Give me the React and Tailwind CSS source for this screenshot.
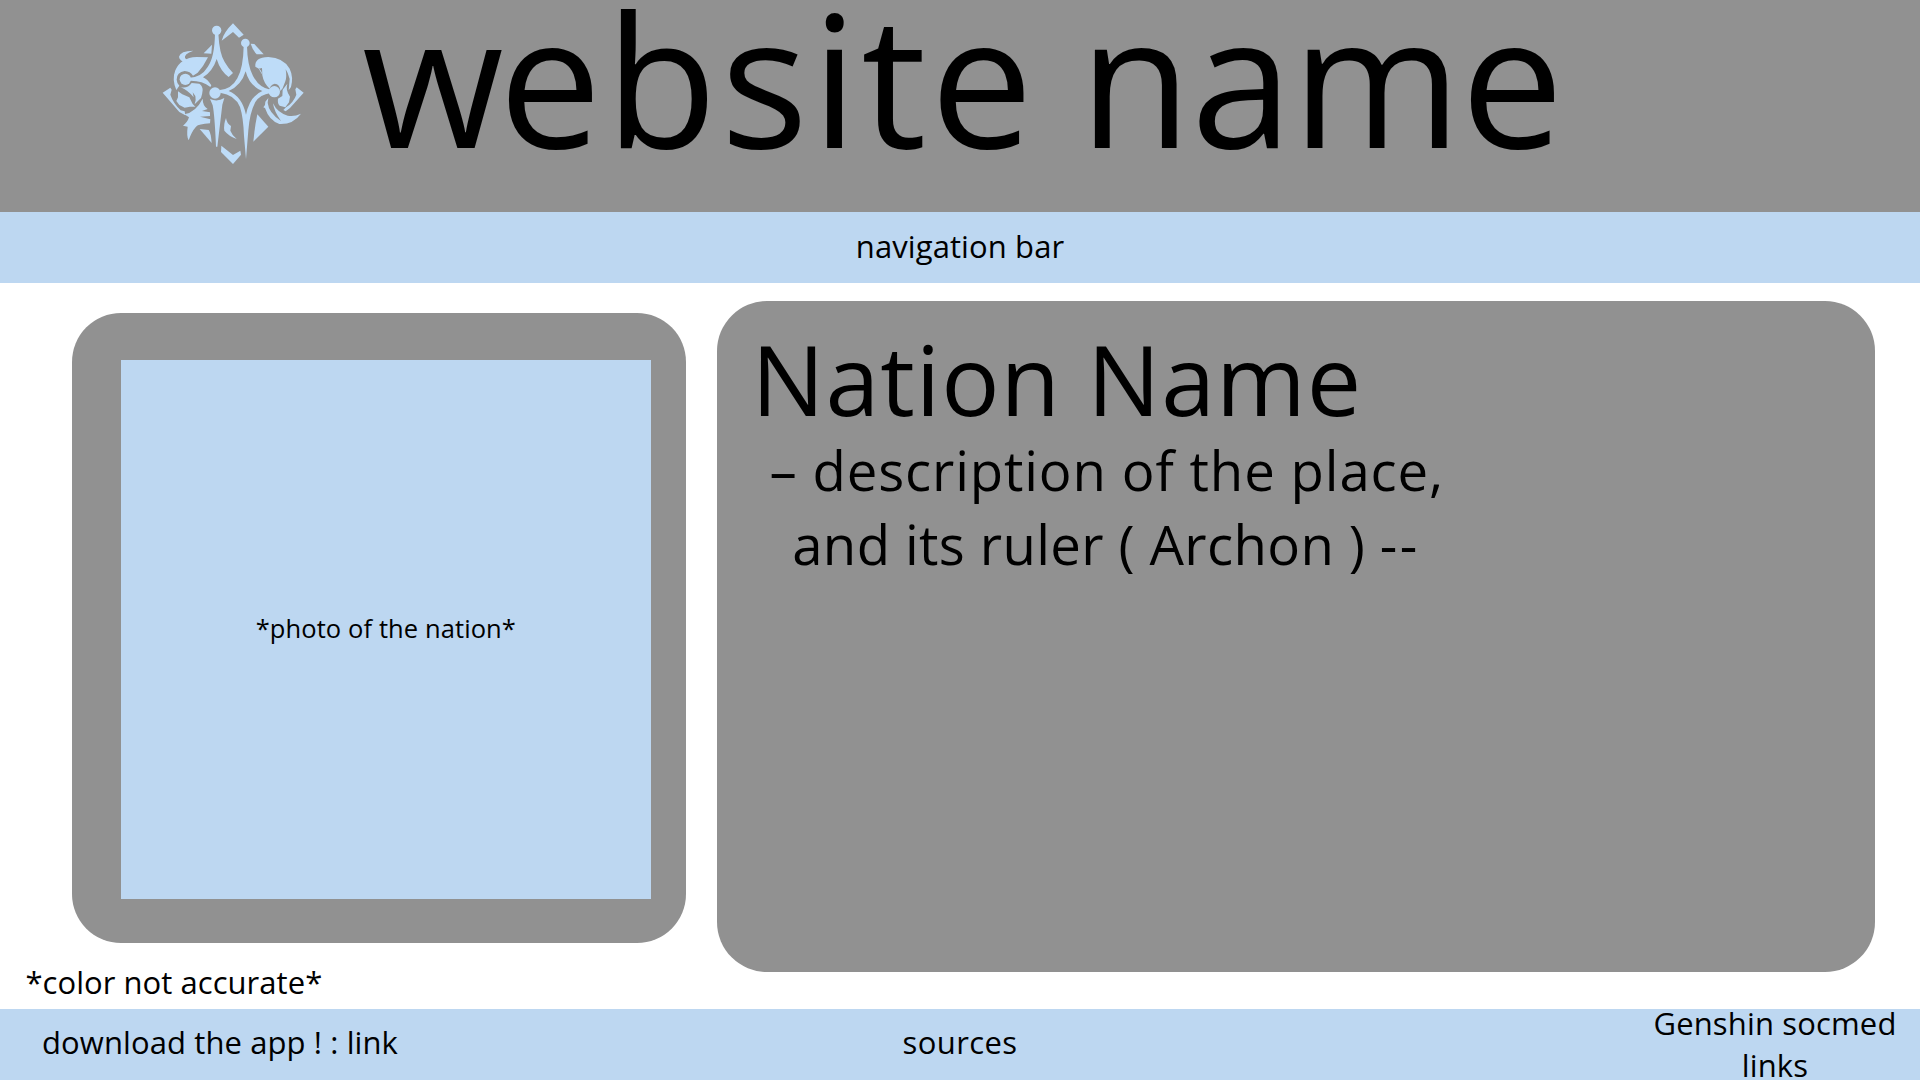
function Emblem() {
  return (
    <svg viewBox="0 0 495 495" className="mt-[10px] ml-[150px] h-[165px] w-[165px] shrink-0 fill-[#bedcf8]" aria-hidden="true">
      {/* frame corners */}
      <path d="M215 92 Q222 66 249 40 L281 74 L267 83 L249 66 Z" />
      <path d="M302 101 L313 102 L341 133 L320 133 Q308 121 302 101 Z" />
      <path d="M186 104 L184 131 L161 130 Z" />
      <path d="M214 407 L249 435 L271 422 L273 434 L249 462 L213 426 Z" />
      <path d="M38 248 L61 233 L65 239 L61 254 Q70 280 92 301 L104 304 L106 316 L88 306 Z" />
      <path d="M461 248 L440 232 L436 238 L439 254 Q431 277 408 292 L400 300 L407 304 L420 294 Z" />
      <path d="M149 357 L176 360 Q183 369 185 399 Z" />
      <path d="M322 313 L355 350 L310 395 Q314 350 322 313 Z" />
      <path d="M228 324 Q230 340 243 348 L241 362 Q246 375 260 387 Q237 379 223 362 Q220 344 228 324 Z" />
      {/* left tall star */}
      <circle cx="200" cy="61" r="14" />
      <path d="M195 70 L205 70 Q208 132 224 156 Q235 175 249 189 L236 201 Q211 183 200 147 Q188 184 159 202 Q172 207 184 226 L181 231 Q156 211 119 212 L119 203 Q154 202 173 171 Q194 142 195 70 Z" />
      <circle cx="106" cy="208" r="17" />
      {/* right tall star */}
      <circle cx="286" cy="99" r="13" />
      <path fillRule="evenodd" d="M281 108 H291 Q292 166 309 198 Q329 235 362 239 V249 Q330 254 316 276 Q299 309 295 361 L288 448 L282 378 Q280 322 270 291 Q255 254 210 248 V240 Q245 237 262 205 Q280 173 281 108 Z M287 184 Q274 227 236 243 Q276 259 288 314 Q299 259 337 243 Q298 228 287 184 Z" />
      <circle cx="195" cy="249" r="17" />
      <circle cx="373" cy="245" r="17" />
      <path d="M180 267 Q202 277 223 264 L217 284 L202 410 L198 410 Q194 315 188 286 Z" />
      {/* left figure */}
      <path d="M130 122 Q101 132 105 144 Q108 150 121 154 L105 158 Q88 151 87 140 Q91 122 130 122 Z" />
      <path d="M174 142 Q161 169 143 188 L129 197 Q121 184 104 183 Q80 186 80 209 Q81 221 88 227 L79 240 Q65 209 76 181 Q92 143 140 141 Z" />
      <path d="M91 231 Q112 237 125 219 L148 221 Q158 228 158 240 Q157 254 153 264 L134 283 Q139 270 136 258 L128 247 L131 262 Q116 242 91 231 Z" />
      <path d="M84 244 L97 253 L118 262 L128 282 L136 290 L120 290 L104 293 L88 285 L79 273 L84 262 Z" />
      <path d="M103 313 Q138 306 158 266 Q158 288 173 297 L156 303 L180 307 V318 L150 320 L181 328 L180 340 Q146 342 138 350 Q124 366 116 391 Q109 378 113 350 L99 347 Q113 336 117 322 Z" />
      {/* right figure */}
      <path fillRule="evenodd" d="M316 170 Q313 142 355 141 Q400 143 419 176 Q431 201 423 231 L416 241 L419 207 Q414 188 407 178 Q411 201 406 214 L398 235 L391 243 Q390 222 374 221 Q361 225 359 236 Q341 220 337 196 Q335 179 324 175 Z M326 176 L337 194 L336 174 Z" />
      <path d="M412 221 Q406 240 420 260 L417 277 L406 292 L389 287 Q382 281 384 266 L397 258 L398 239 Z" />
      <path d="M355 264 L353 278 Q356 308 393 333 Q372 304 369 280 Q382 308 413 317 Q432 321 453 311 Q429 344 388 342 Q357 331 345 294 L340 292 Q347 286 346 275 Z" />
    </svg>
  );
}

export default function App() {
  return (
    <div className="flex h-[1080px] w-[1920px] flex-col overflow-hidden bg-white font-['Open_Sans','Noto_Sans',sans-serif] text-[31px] text-black">
      <header className="flex h-[212px] shrink-0 items-start bg-[#919191]">
        <Emblem />
        <h1 className="ml-[47px] text-[183px] leading-[154px] tracking-[-0.6px] whitespace-nowrap">
          <span className="tracking-[-5px]">w</span>
          <span className="tracking-[3.6px]">ebsit</span>e name
        </h1>
      </header>

      <nav className="flex h-[71px] shrink-0 justify-center bg-[#bdd7f1] leading-[68px] tracking-[0.1px]">
        <span>navigation bar</span>
      </nav>

      <main className="flex h-[726px] shrink-0 items-start gap-[31.5px] pl-[72px]">
        <section className="w-[613.5px] shrink-0 pt-[29.7px]">
          <div className="h-[630.3px] rounded-[49px] bg-[#919191] px-[48.7px] pt-[47.5px]">
            <div className="flex h-[538.7px] w-[530.3px] items-center justify-center bg-[#bdd7f1] pb-[3px] text-[25.5px] tracking-[0.1px]">
              *photo of the nation*
            </div>
          </div>
          <p className="mt-[18px] -ml-[46.6px] leading-[42px] tracking-[0.05px]">*color not accurate*</p>
        </section>

        <section className="mt-[18.3px] h-[670.6px] w-[1158px] rounded-[50px] bg-[#919191] pt-[22px] pl-[34.5px]">
          <h2 className="text-[97px] leading-[110px] tracking-[0.95px]">Nation Name</h2>
          <p className="pl-[18px] text-[54.5px] leading-[74px] tracking-[0.85px]">– description of the place,</p>
          <p className="pl-[40.7px] text-[54.5px] leading-[74px] tracking-[0.38px]">
            and its ruler ( Archon ) <span className="tracking-[2.5px]">--</span>
          </p>
        </section>
      </main>

      <footer className="grid h-[71px] shrink-0 grid-cols-3 overflow-hidden bg-[#bdd7f1] leading-[66px]">
        <p className="pl-[42px] tracking-[0.1px]">download the app ! : link</p>
        <p className="text-center tracking-[0.4px]">sources</p>
        <p className="-mt-[7px] w-[290px] justify-self-end text-center leading-[42px] tracking-[0.15px]">
          Genshin socmed
          <br />
          links
        </p>
      </footer>
    </div>
  );
}
